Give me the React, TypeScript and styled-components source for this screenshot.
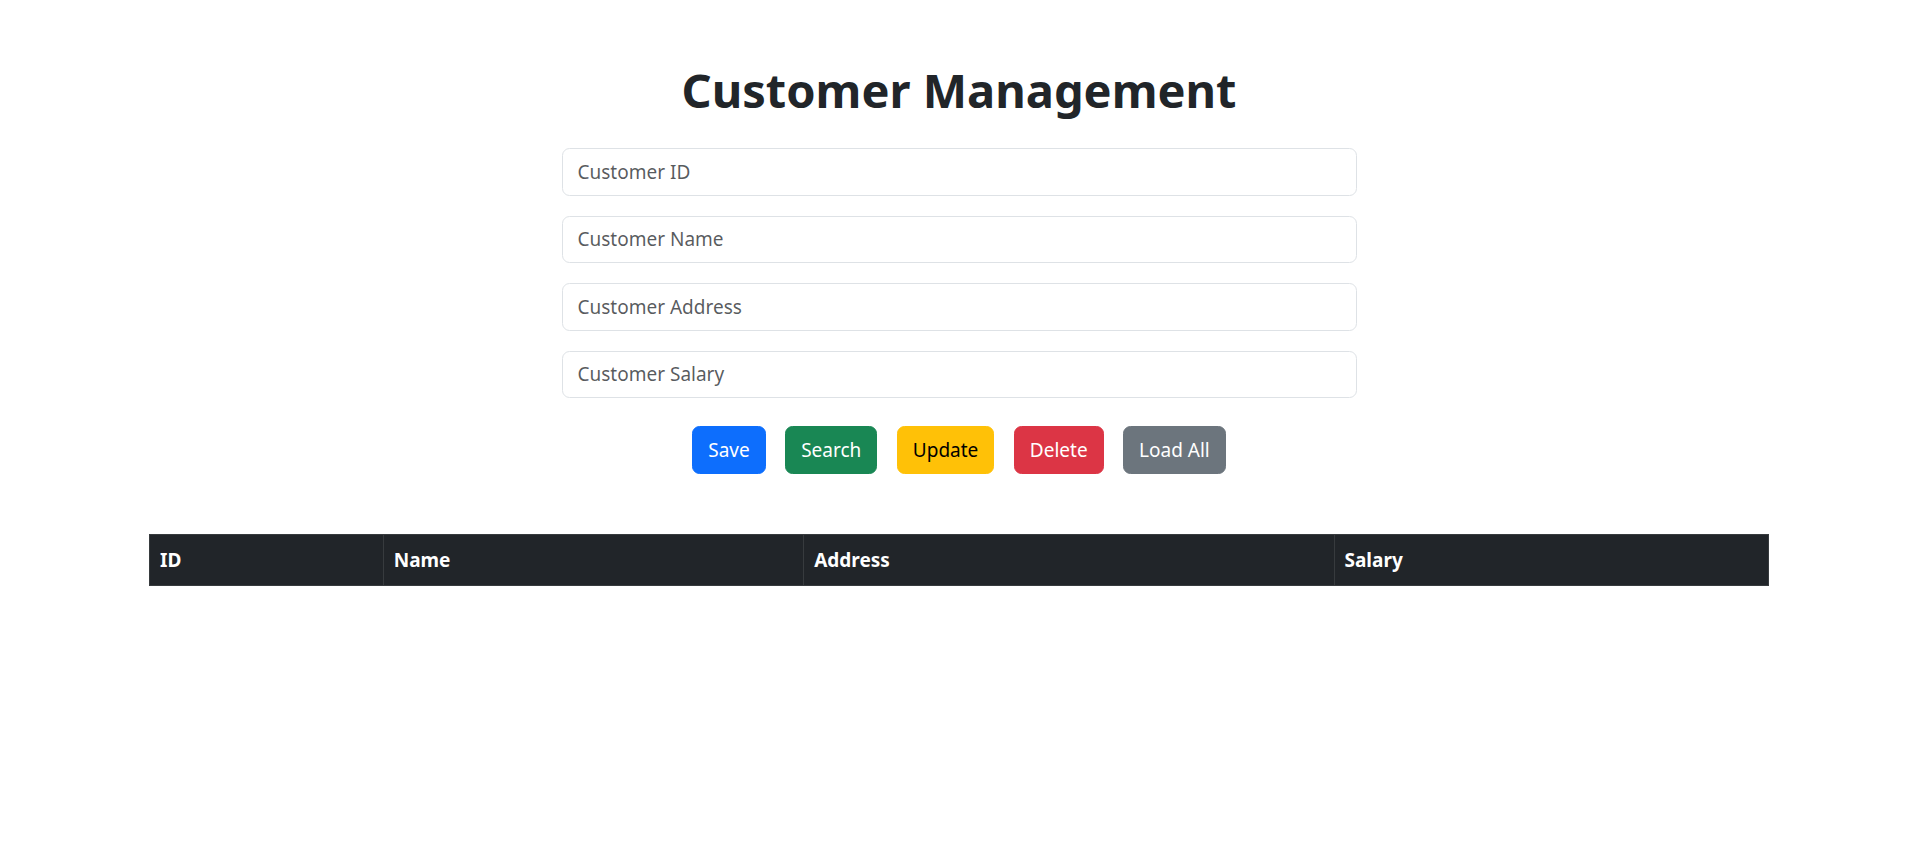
import React from "react";
import styled, { createGlobalStyle } from "styled-components";

const GlobalStyle = createGlobalStyle`
  * {
    box-sizing: border-box;
  }
  body {
    margin: 0;
    background: #ffffff;
    color: #212529;
    font-family: "Segoe UI", "Noto Sans", "Liberation Sans", sans-serif;
    font-size: 19px;
    line-height: 30px;
  }
`;

const Container = styled.div`
  max-width: 1650px;
  margin: 0 auto;
  padding: 0 15px;
`;

const Title = styled.h1`
  margin: 60px 0 28px;
  font-size: 47px;
  font-weight: 700;
  line-height: 60px;
  text-align: center;
  color: #212529;
`;

const Form = styled.div`
  width: 795px;
  margin: 0 auto;
`;

const Input = styled.input`
  display: block;
  width: 100%;
  height: 47.5px;
  margin-bottom: 20px;
  padding: 7.5px 15px;
  font-family: inherit;
  font-size: 19px;
  color: #212529;
  background: #fff;
  border: 1px solid #dee2e6;
  border-radius: 7.5px;
  outline: none;

  &::placeholder {
    color: rgba(33, 37, 41, 0.75);
  }
`;

const ButtonRow = styled.div`
  display: flex;
  justify-content: center;
  gap: 19.5px;
  margin-top: 28px;
`;

const variants: Record<string, { bg: string; fg: string }> = {
  primary: { bg: "#0d6efd", fg: "#fff" },
  success: { bg: "#198754", fg: "#fff" },
  warning: { bg: "#ffc107", fg: "#000" },
  danger: { bg: "#dc3545", fg: "#fff" },
  secondary: { bg: "#6c757d", fg: "#fff" },
};

const Button = styled.button<{ $variant: string }>`
  height: 47.5px;
  padding: 0 15px;
  font-family: inherit;
  font-size: 19px;
  line-height: 30px;
  border: 1px solid ${({ $variant }) => variants[$variant].bg};
  border-radius: 7.5px;
  background: ${({ $variant }) => variants[$variant].bg};
  color: ${({ $variant }) => variants[$variant].fg};
  cursor: pointer;
`;

const Table = styled.table`
  width: 100%;
  margin-top: 60px;
  border-collapse: collapse;
`;

const Th = styled.th<{ $width: number }>`
  width: ${({ $width }) => $width}px;
  padding: 10px;
  text-align: left;
  font-weight: 700;
  font-size: 19px;
  line-height: 30px;
  color: #fff;
  background: #212529;
  border: 1px solid #373b3e;
`;

const columns = [
  { label: "ID", width: 234 },
  { label: "Name", width: 421 },
  { label: "Address", width: 531 },
  { label: "Salary", width: 435 },
];

const buttons = [
  { label: "Save", variant: "primary" },
  { label: "Search", variant: "success" },
  { label: "Update", variant: "warning" },
  { label: "Delete", variant: "danger" },
  { label: "Load All", variant: "secondary" },
];

const App: React.FC = () => {
  return (
    <>
      <GlobalStyle />
      <Container>
        <Title>Customer Management</Title>
        <Form>
          <Input placeholder="Customer ID" />
          <Input placeholder="Customer Name" />
          <Input placeholder="Customer Address" />
          <Input placeholder="Customer Salary" />
          <ButtonRow>
            {buttons.map((b) => (
              <Button key={b.label} $variant={b.variant}>
                {b.label}
              </Button>
            ))}
          </ButtonRow>
        </Form>
        <Table>
          <thead>
            <tr>
              {columns.map((c) => (
                <Th key={c.label} $width={c.width}>
                  {c.label}
                </Th>
              ))}
            </tr>
          </thead>
          <tbody />
        </Table>
      </Container>
    </>
  );
};

export default App;
